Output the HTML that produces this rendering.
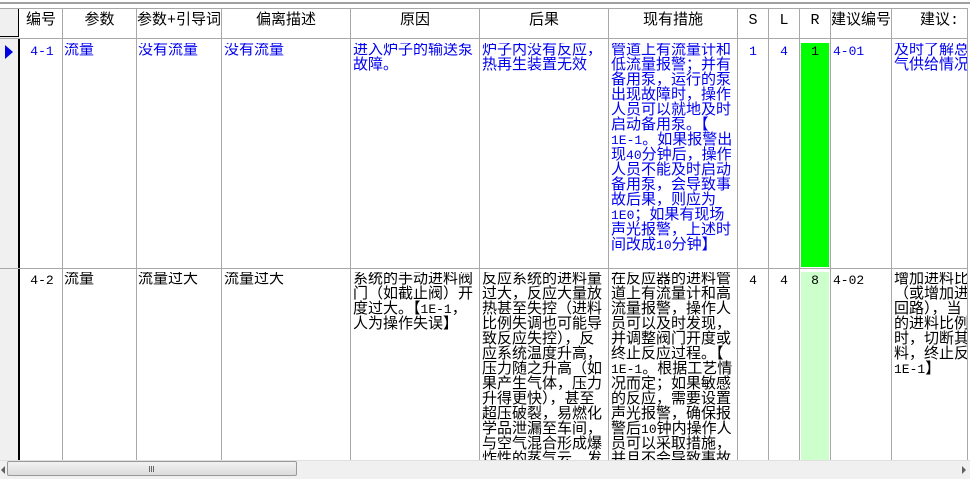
<!DOCTYPE html>
<html><head><meta charset="utf-8"><style>
*{margin:0;padding:0;box-sizing:border-box}
body{width:970px;height:479px;background:#fff;position:relative;overflow:hidden;font-family:"Liberation Mono","Noto Sans CJK SC",monospace;font-size:15px;line-height:15px}
.c{position:absolute;overflow:hidden;white-space:nowrap}
.v{position:absolute;top:8px;width:1px;height:452px;background:#a8a8a8}
.h{position:absolute;left:0;width:967px;height:1px;background:#a8a8a8}
.b{color:#0000f0}
.m{font-size:13px}
.hd{position:absolute;top:10px;height:28px;line-height:22px;text-align:center;color:#000;overflow:hidden;white-space:nowrap}
.ctr{text-align:center}
</style></head><body>
<div style="position:absolute;left:0;top:2px;width:970px;height:2px;background:#a0a0a0"></div>
<div style="position:absolute;left:0;top:8px;width:19px;height:452px;background:#f0f0f0"></div>
<div style="position:absolute;left:0;top:8px;width:19px;height:29px;border:1px solid #000;border-left:none;background:#f0f0f0"></div>
<div style="position:absolute;left:18px;top:38px;width:2px;height:422px;background:#000"></div>
<div class="h" style="top:8px"></div>
<div class="h" style="top:38px"></div>
<div class="h" style="top:268px"></div>
<div class="v" style="left:62px"></div>
<div class="v" style="left:136px"></div>
<div class="v" style="left:221px"></div>
<div class="v" style="left:350px"></div>
<div class="v" style="left:479px"></div>
<div class="v" style="left:608px"></div>
<div class="v" style="left:737px"></div>
<div class="v" style="left:768px"></div>
<div class="v" style="left:799px"></div>
<div class="v" style="left:830px"></div>
<div class="v" style="left:891px"></div>
<div class="v" style="left:967px"></div>
<div class="hd" style="left:20px;width:42px">编号</div>
<div class="hd" style="left:63px;width:73px">参数</div>
<div class="hd" style="left:137px;width:84px">参数+引导词</div>
<div class="hd" style="left:222px;width:128px">偏离描述</div>
<div class="hd" style="left:351px;width:128px">原因</div>
<div class="hd" style="left:480px;width:128px">后果</div>
<div class="hd" style="left:609px;width:128px">现有措施</div>
<div class="hd" style="left:738px;width:30px">S</div>
<div class="hd" style="left:769px;width:30px">L</div>
<div class="hd" style="left:800px;width:30px">R</div>
<div class="hd" style="left:831px;width:60px">建议编号</div>
<div class="hd" style="left:892px;width:75px;text-align:left;padding-left:28px">建议:</div>
<svg style="position:absolute;left:5px;top:45px" width="8" height="14"><polygon points="0,0 8,7 0,14" fill="#0000e0"/></svg>
<div style="position:absolute;left:801px;top:43px;width:28px;height:224px;background:#00ff00"></div>
<div style="position:absolute;left:801px;top:272px;width:28px;height:188px;background:#ccffcc"></div>
<!-- row1 -->
<div class="c b m" style="left:22px;top:44px;width:40px;text-align:center">4-1</div>
<div class="c b" style="left:64px;top:43px">流量</div>
<div class="c b" style="left:138px;top:43px">没有流量</div>
<div class="c b" style="left:224px;top:43px">没有流量</div>
<div class="c b" style="left:353px;top:43px">进入炉子的输送泵<br>故障。</div>
<div class="c b" style="left:482px;top:43px">炉子内没有反应，<br>热再生装置无效</div>
<div class="c b" style="left:611px;top:43px;width:126px">管道上有流量计和<br>低流量报警；并有<br>备用泵，运行的泵<br>出现故障时，操作<br>人员可以就地及时<br>启动备用泵。【<br><span class="m">1E-1</span>。如果报警出<br>现<span class="m">40</span>分钟后，操作<br>人员不能及时启动<br>备用泵，会导致事<br>故后果，则应为<br><span class="m">1E0</span>；如果有现场<br>声光报警，上述时<br>间改成<span class="m">10</span>分钟】</div>
<div class="c b ctr m" style="left:738px;top:44px;width:30px">1</div>
<div class="c b ctr m" style="left:769px;top:44px;width:30px">4</div>
<div class="c ctr m" style="left:800px;top:44px;width:30px;color:#000">1</div>
<div class="c b m" style="left:833px;top:44px">4-01</div>
<div class="c b" style="left:894px;top:43px;width:73px">及时了解总<br>气供给情况</div>
<!-- row2 -->
<div class="c m" style="left:22px;top:273px;width:40px;text-align:center">4-2</div>
<div class="c" style="left:64px;top:272px">流量</div>
<div class="c" style="left:138px;top:272px">流量过大</div>
<div class="c" style="left:224px;top:272px">流量过大</div>
<div class="c" style="left:353px;top:272px;width:126px">系统的手动进料阀<br>门（如截止阀）开<br>度过大。【<span class="m">1E-1</span>，<br>人为操作失误】</div>
<div class="c" style="left:482px;top:272px;height:188px;width:126px">反应系统的进料量<br>过大，反应大量放<br>热甚至失控（进料<br>比例失调也可能导<br>致反应失控），反<br>应系统温度升高，<br>压力随之升高（如<br>果产生气体，压力<br>升得更快），甚至<br>超压破裂，易燃化<br>学品泄漏至车间，<br>与空气混合形成爆<br>炸性的蒸气云，发</div>
<div class="c" style="left:611px;top:272px;height:188px;width:126px">在反应器的进料管<br>道上有流量计和高<br>流量报警，操作人<br>员可以及时发现，<br>并调整阀门开度或<br>终止反应过程。【<br><span class="m">1E-1</span>。根据工艺情<br>况而定；如果敏感<br>的反应，需要设置<br>声光报警，确保报<br>警后<span class="m">10</span>钟内操作人<br>员可以采取措施，<br>并且不会导致事故</div>
<div class="c ctr m" style="left:738px;top:273px;width:30px">4</div>
<div class="c ctr m" style="left:769px;top:273px;width:30px">4</div>
<div class="c ctr m" style="left:800px;top:273px;width:30px">8</div>
<div class="c m" style="left:833px;top:273px">4-02</div>
<div class="c" style="left:894px;top:272px;width:73px">增加进料比<br>（或增加进<br>回路），当<br>的进料比例<br>时，切断其<br>料，终止反<br><span class="m">1E-1</span>】</div>
<!-- scrollbar -->
<div style="position:absolute;left:0;top:460px;width:970px;height:19px;background:#f0f0f0;border-top:1px solid #e0e0e0"></div>
<svg style="position:absolute;left:1px;top:466px" width="5" height="8"><polygon points="4,0 0,4 4,8" fill="#606060"/></svg>
<svg style="position:absolute;left:962px;top:466px" width="5" height="8"><polygon points="0,0 4,4 0,8" fill="#606060"/></svg>
<div style="position:absolute;left:7px;top:461px;width:290px;height:15px;border:1px solid #999;border-radius:2px;background:linear-gradient(#f2f2f2,#dcdcdc)"></div>
<div style="position:absolute;left:149px;top:466px;width:5px;height:6px;border-left:1px solid #666;border-right:1px solid #666"><div style="margin-left:1px;width:1px;height:6px;background:#666"></div></div>
</body></html>
